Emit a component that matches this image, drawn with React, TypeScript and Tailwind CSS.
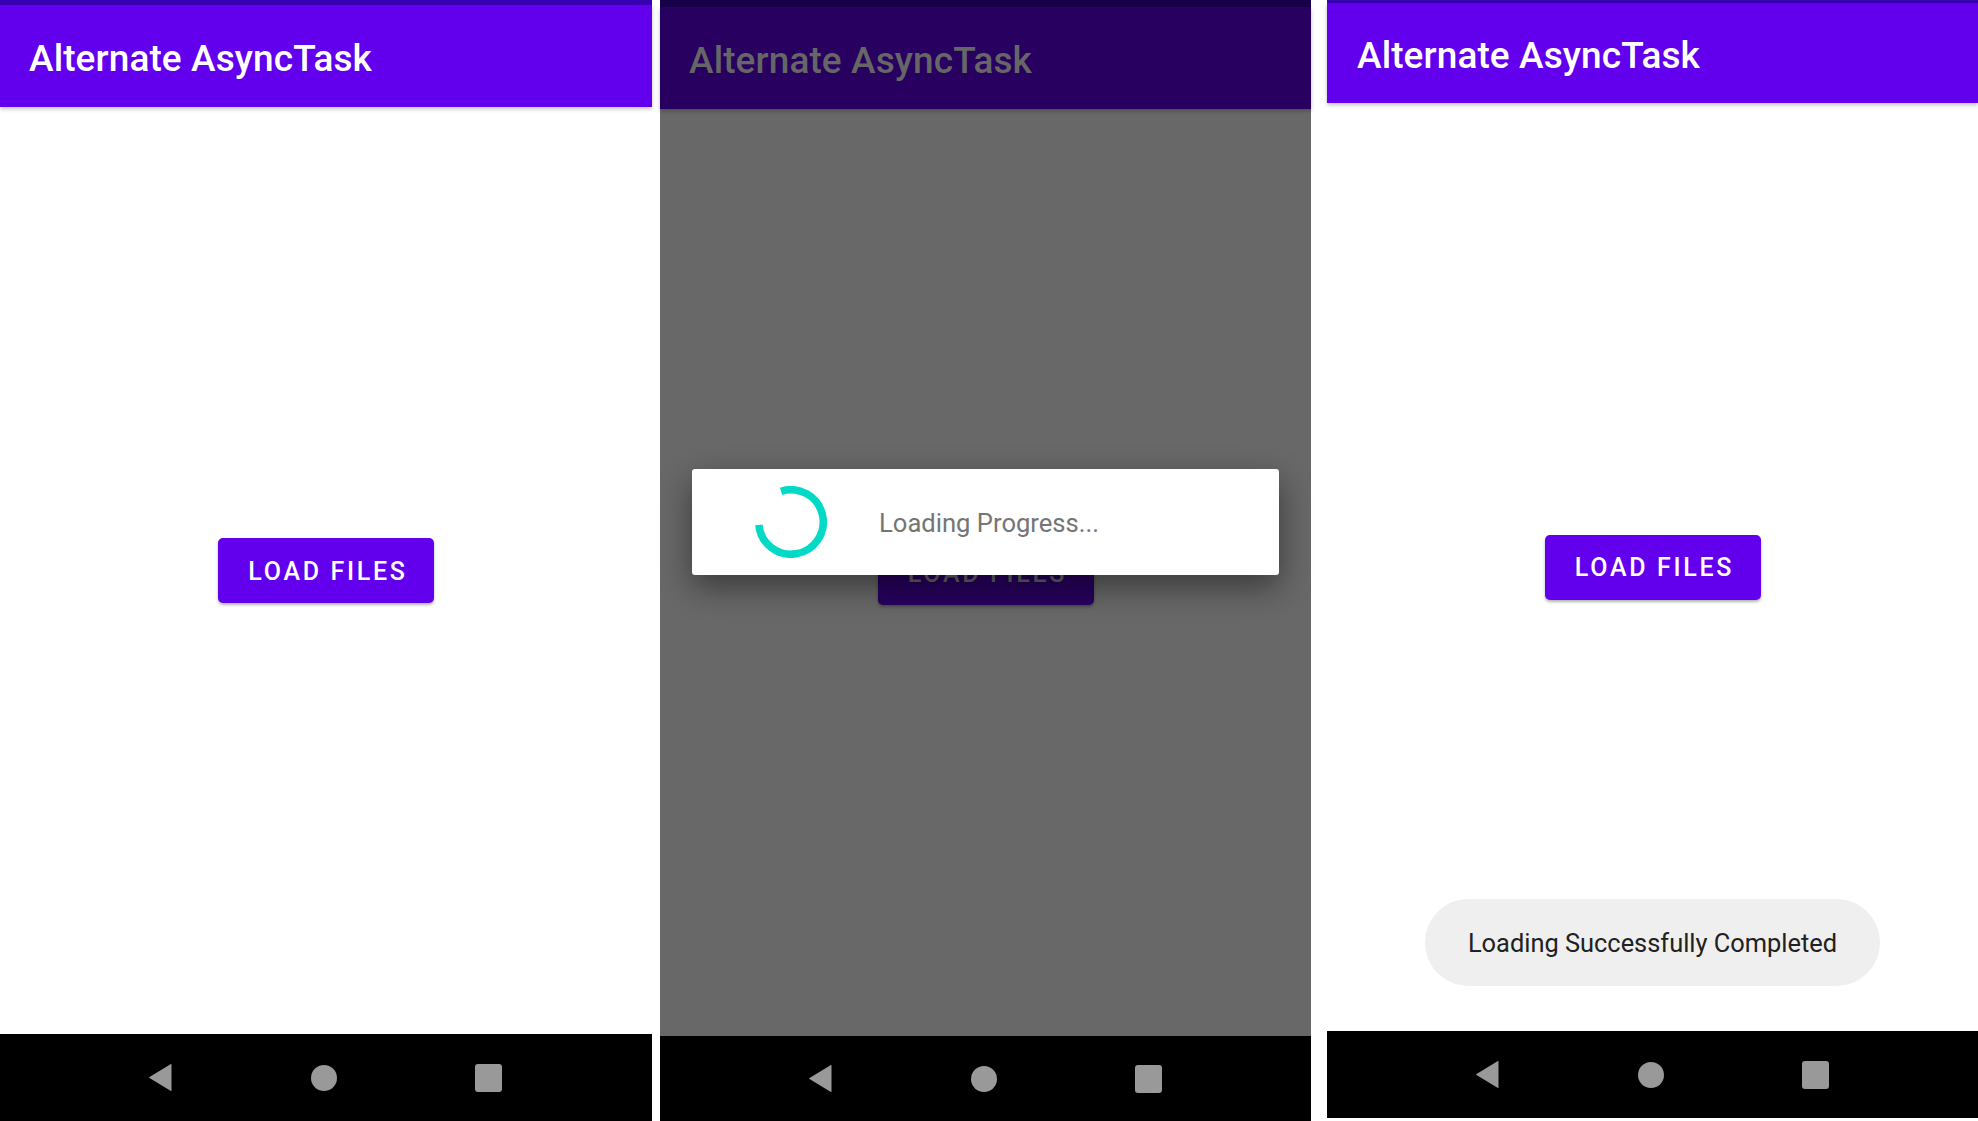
import type {JSX} from 'react';

interface NavBarProps {
    className: string;
}

function NavBar({className}: NavBarProps): JSX.Element {
    return (
        <div className={`flex items-center justify-center bg-black ${className}`}>
            <div className="flex items-center gap-[138px] pr-[2px]">
                <svg width="25" height="29" viewBox="0 0 25 29">
                    <path d="M23.5 1.5 L23.5 27.5 Q23.5 28.5 22.5 27.8 L1.5 15 Q0.6 14.5 1.5 14 L22.5 1.2 Q23.5 0.6 23.5 1.5 Z"
                          fill="#999999"/>
                </svg>
                <div className="w-[26px] h-[26px] rounded-full bg-[#999999]"/>
                <div className="w-[27px] h-[28px] rounded-[3px] bg-[#999999]"/>
            </div>
        </div>
    );
}

function Spinner(): JSX.Element {
    return (
        <svg width="72" height="72" viewBox="0 0 72 72">
            <path d="M26.03 5.33 A32.25 32.25 0 1 1 3.87 38.81" fill="none" stroke="#03DAC5" strokeWidth="7.5"/>
        </svg>
    );
}

function App(): JSX.Element {
    return (
        <div className="flex w-[1978px] h-[1121px] bg-white overflow-hidden font-['Roboto',sans-serif]">
            {/* first screen */}
            <div className="flex flex-col w-[652px] h-[1121px]">
                <div className="h-[5px] bg-[#3700B3]"/>
                <div className="relative z-10 flex items-center h-[102px] px-[29px] pt-[4px] bg-[#6200EE] shadow-[0_2px_4px_rgba(0,0,0,0.25)]">
                    <p className="text-white text-[37px] tracking-[0.1px] font-medium leading-none">Alternate AsyncTask</p>
                </div>
                <div className="flex flex-1 items-center justify-center bg-white">
                    <button className="w-[216px] h-[65px] pt-[2px] pl-[4px] rounded-[5px] bg-[#6200EE] text-white text-[25px] font-medium tracking-[2.7px] shadow-[0_2px_3px_rgba(0,0,0,0.3)]">
                        LOAD FILES
                    </button>
                </div>
                <NavBar className="h-[87px]"/>
            </div>

            {/* second screen, dialog showing */}
            <div className="relative flex flex-col w-[651px] h-[1121px] ml-[8px]">
                <div className="h-[7px] bg-[#16004a]"/>
                <div className="relative z-10 flex items-center h-[102px] px-[29px] pt-[4px] bg-[#28005f] shadow-[0_2px_4px_rgba(0,0,0,0.25)]">
                    <p className="text-[#666666] text-[37px] tracking-[0.1px] font-medium leading-none">Alternate AsyncTask</p>
                </div>
                <div className="flex flex-1 items-center justify-center bg-[#686868]">
                    <button className="w-[216px] h-[65px] pt-[2px] pl-[4px] rounded-[5px] bg-[#27005f] text-[#666666] text-[25px] font-medium tracking-[2.7px] shadow-[0_2px_3px_rgba(0,0,0,0.3)]">
                        LOAD FILES
                    </button>
                </div>
                <NavBar className="h-[85px]"/>
                <div className="absolute z-20 left-[32px] top-[469px] flex items-center w-[587px] h-[106px] rounded-[3px] bg-white shadow-[0_12px_32px_rgba(0,0,0,0.45)]">
                    <div className="ml-[63px]">
                        <Spinner/>
                    </div>
                    <p className="ml-[52px] pt-[2px] text-[25.6px] text-[#757575]">Loading Progress...</p>
                </div>
            </div>

            {/* third screen, toast */}
            <div className="relative flex flex-col w-[651px] h-[1121px] ml-[16px]">
                <div className="h-[3px] bg-[#3700B3]"/>
                <div className="relative z-10 flex items-center h-[100px] px-[30px] pt-[4px] bg-[#6200EE] shadow-[0_2px_4px_rgba(0,0,0,0.25)]">
                    <p className="text-white text-[37px] tracking-[0.1px] font-medium leading-none">Alternate AsyncTask</p>
                </div>
                <div className="relative flex flex-1 items-center justify-center bg-white">
                    <button className="w-[216px] h-[65px] pt-[2px] pl-[4px] rounded-[5px] bg-[#6200EE] text-white text-[25px] font-medium tracking-[2.7px] shadow-[0_2px_3px_rgba(0,0,0,0.3)]">
                        LOAD FILES
                    </button>
                    <div className="absolute bottom-[45px] left-[98px] flex items-center justify-center w-[455px] h-[87px] pt-[2px] rounded-full bg-[#efefef]">
                        <p className="text-[25.4px] text-[#212121]">Loading Successfully Completed</p>
                    </div>
                </div>
                <NavBar className="h-[87px]"/>
                <div className="h-[3px] bg-white"/>
            </div>
        </div>
    );
}

export default App;
